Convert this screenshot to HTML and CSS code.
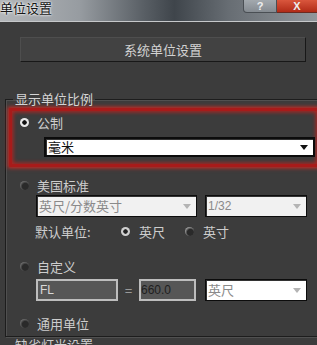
FILE: index.html
```html
<!DOCTYPE html>
<html lang="zh-CN">

<head>
    <meta charset="UTF-8">
    <title>单位设置</title>
    <link rel="stylesheet" href="styles.css">
</head>

<body>
    <div class="titlebar">
        <span class="title">单位设置</span>
        <div class="win-btns">
            <span class="help">?</span>
            <span class="close">X</span>
        </div>
    </div>

    <div class="sys-btn">系统单位设置</div>

    <fieldset class="group">
        <legend>显示单位比例</legend>

        <div class="highlight">
            <div class="row">
                <span class="radio on"></span>
                <span>公制</span>
            </div>
            <div class="select wide">毫米</div>
        </div>

        <div class="row first">
            <span class="radio"></span>
            <span>美国标准</span>
        </div>
        <div class="controls us">
            <div class="select off feet">英尺/分数英寸</div>
            <div class="select off small">1/32</div>
        </div>
        <div class="row default">
            <span class="label">默认单位:</span>
            <span class="radio on dim"></span>
            <span>英尺</span>
            <span class="radio dim"></span>
            <span>英寸</span>
        </div>

        <div class="row custom">
            <span class="radio"></span>
            <span>自定义</span>
        </div>
        <div class="controls fields">
            <div class="field fl">FL</div>
            <span class="equals">=</span>
            <div class="field num">660.0</div>
            <div class="select white small">英尺</div>
        </div>

        <div class="row generic">
            <span class="radio"></span>
            <span>通用单位</span>
        </div>
    </fieldset>

    <div class="next">缺省灯光设置</div>
</body>

</html>
```

FILE: styles.css
```css
body {
    margin: 0;
    width: 317px;
    height: 345px;
    overflow: hidden;
    background-color: #3c3c3c;
    color: #cdcdcd;
    font-family: "Noto Sans CJK SC", "Noto Sans", sans-serif;
    font-size: 13px;
}

.titlebar {
    display: flex;
    align-items: flex-start;
    height: 21px;
    background: linear-gradient(90deg, #b4b7ba 0%, #979ca1 25%, #5a6066 45%, #3f454b 55%, #676d73 72%, #92979c 100%);
    border-bottom: 1px solid #c6c8ca;
}

.title {
    color: #161616;
    line-height: 15px;
    text-shadow: 0 0 3px #fff, 0 0 2px #fff;
}

.win-btns {
    display: flex;
    margin-left: auto;
}

.help,
.close {
    height: 12px;
    line-height: 12px;
    text-align: center;
    font-family: "Liberation Sans", sans-serif;
    font-weight: bold;
    font-size: 11px;
    color: #eee;
}

.help {
    width: 32px;
    border: 1px solid #4a4f54;
    border-top: none;
    border-radius: 0 0 0 4px;
    background: linear-gradient(#a3a9ae, #858b91);
}

.close {
    width: 40px;
    background: linear-gradient(#d9563d, #b12b17);
    border-bottom: 1px solid #6d2a20;
}

.sys-btn {
    display: flex;
    align-items: center;
    justify-content: center;
    box-sizing: border-box;
    height: 25px;
    margin: 15px 11px 0 20px;
    background-color: #424242;
    border: 1px solid;
    border-color: #4e4e4e #181818 #181818 #4e4e4e;
    color: #d2d2d2;
}

.group {
    width: 330px;
    margin: 30px 0 0 5px;
    padding: 2px 0 6px 3px;
    border: 1px solid #1d1d1d;
    box-shadow: 1px 1px 0 #505050, inset 1px 1px 0 #505050;
}

.group legend {
    padding: 0 2px;
    margin-left: 4px;
    line-height: 14px;
    color: #d4d4d4;
}

.highlight {
    width: 297px;
    padding: 4px 0 7px 8px;
    border: 3px solid #a81b1a;
    box-shadow: 0 0 4px 1px #d52a24, inset 0 0 4px 1px #b92420;
}

.row {
    display: flex;
    align-items: center;
    height: 14px;
    gap: 8px;
}

.group > .row {
    padding-left: 11px;
}

.radio {
    width: 9px;
    height: 9px;
    border-radius: 50%;
    background: radial-gradient(circle at 60% 60%, #2a2a2a 0 40%, #6a6a6a 70%, #8a8a8a 100%);
}

.radio.on {
    background: radial-gradient(circle, #111 0 30%, #e8e8e8 40% 70%, #999 100%);
}

.radio.dim {
    margin-left: 11px;
    background: radial-gradient(circle, #222 0 30%, #cfcfcf 40% 70%, #777 100%);
}

.radio.dim:not(.on) {
    background: radial-gradient(circle at 60% 60%, #2a2a2a 0 40%, #9a9a9a 70%, #c0c0c0 100%);
}

.select {
    position: relative;
    box-sizing: border-box;
    height: 20px;
    line-height: 18px;
    padding-left: 2px;
    background-color: #fff;
    border: 1px solid #0c0c0c;
    box-shadow: inset 1px 1px 0 #333;
    color: #111;
}

.select::after {
    content: "";
    position: absolute;
    right: 5px;
    top: 7px;
    border: 4px solid transparent;
    border-top: 5px solid #111;
    border-bottom: none;
}

.select.wide {
    width: 271px;
    margin: 8px 0 0 24px;
    border-width: 2px;
    line-height: 16px;
}

.select.wide::after {
    top: 6px;
}

.select.off {
    background-color: #f1f1f1;
    color: #8a8a8a;
}

.select.off::after,
.select.white::after {
    border-top-color: #b4b4b4;
}

.select.white {
    color: #8a8a8a;
}

.controls {
    display: flex;
    align-items: center;
    margin-left: 27px;
}

.controls .select {
    height: 22px;
    line-height: 20px;
}

.controls .select::after {
    top: 8px;
}

.row.first {
    margin-top: 11px;
}

.controls.us {
    margin-top: 3px;
    gap: 8px;
}

.feet {
    width: 161px;
}

.small {
    width: 102px;
    font-family: "Liberation Sans", sans-serif;
    font-size: 12px;
}

.select.white.small {
    margin-left: 9px;
    font-family: "Noto Sans CJK SC", sans-serif;
    font-size: 13px;
}

.row.default {
    margin-top: 7px;
    padding-left: 26px;
    gap: 9px;
}

.row.default .label {
    width: 66px;
}

.row.custom {
    margin-top: 21px;
}

.controls.fields {
    margin-top: 6px;
}

.field {
    box-sizing: border-box;
    height: 22px;
    line-height: 18px;
    padding-left: 2px;
    background-color: #565656;
    border: 2px solid #bdbdbd;
    color: #d8d8d8;
    font-family: "Liberation Sans", sans-serif;
    font-size: 12px;
}

.fl {
    width: 82px;
}

.num {
    width: 57px;
    padding-left: 0;
    color: #1e1e1e;
}

.equals {
    width: 21px;
    text-align: center;
    color: #999;
    font-family: "Liberation Sans", sans-serif;
}

.row.generic {
    margin-top: 15px;
}

.next {
    margin: 1px 0 0 15px;
    line-height: 14px;
}
```
